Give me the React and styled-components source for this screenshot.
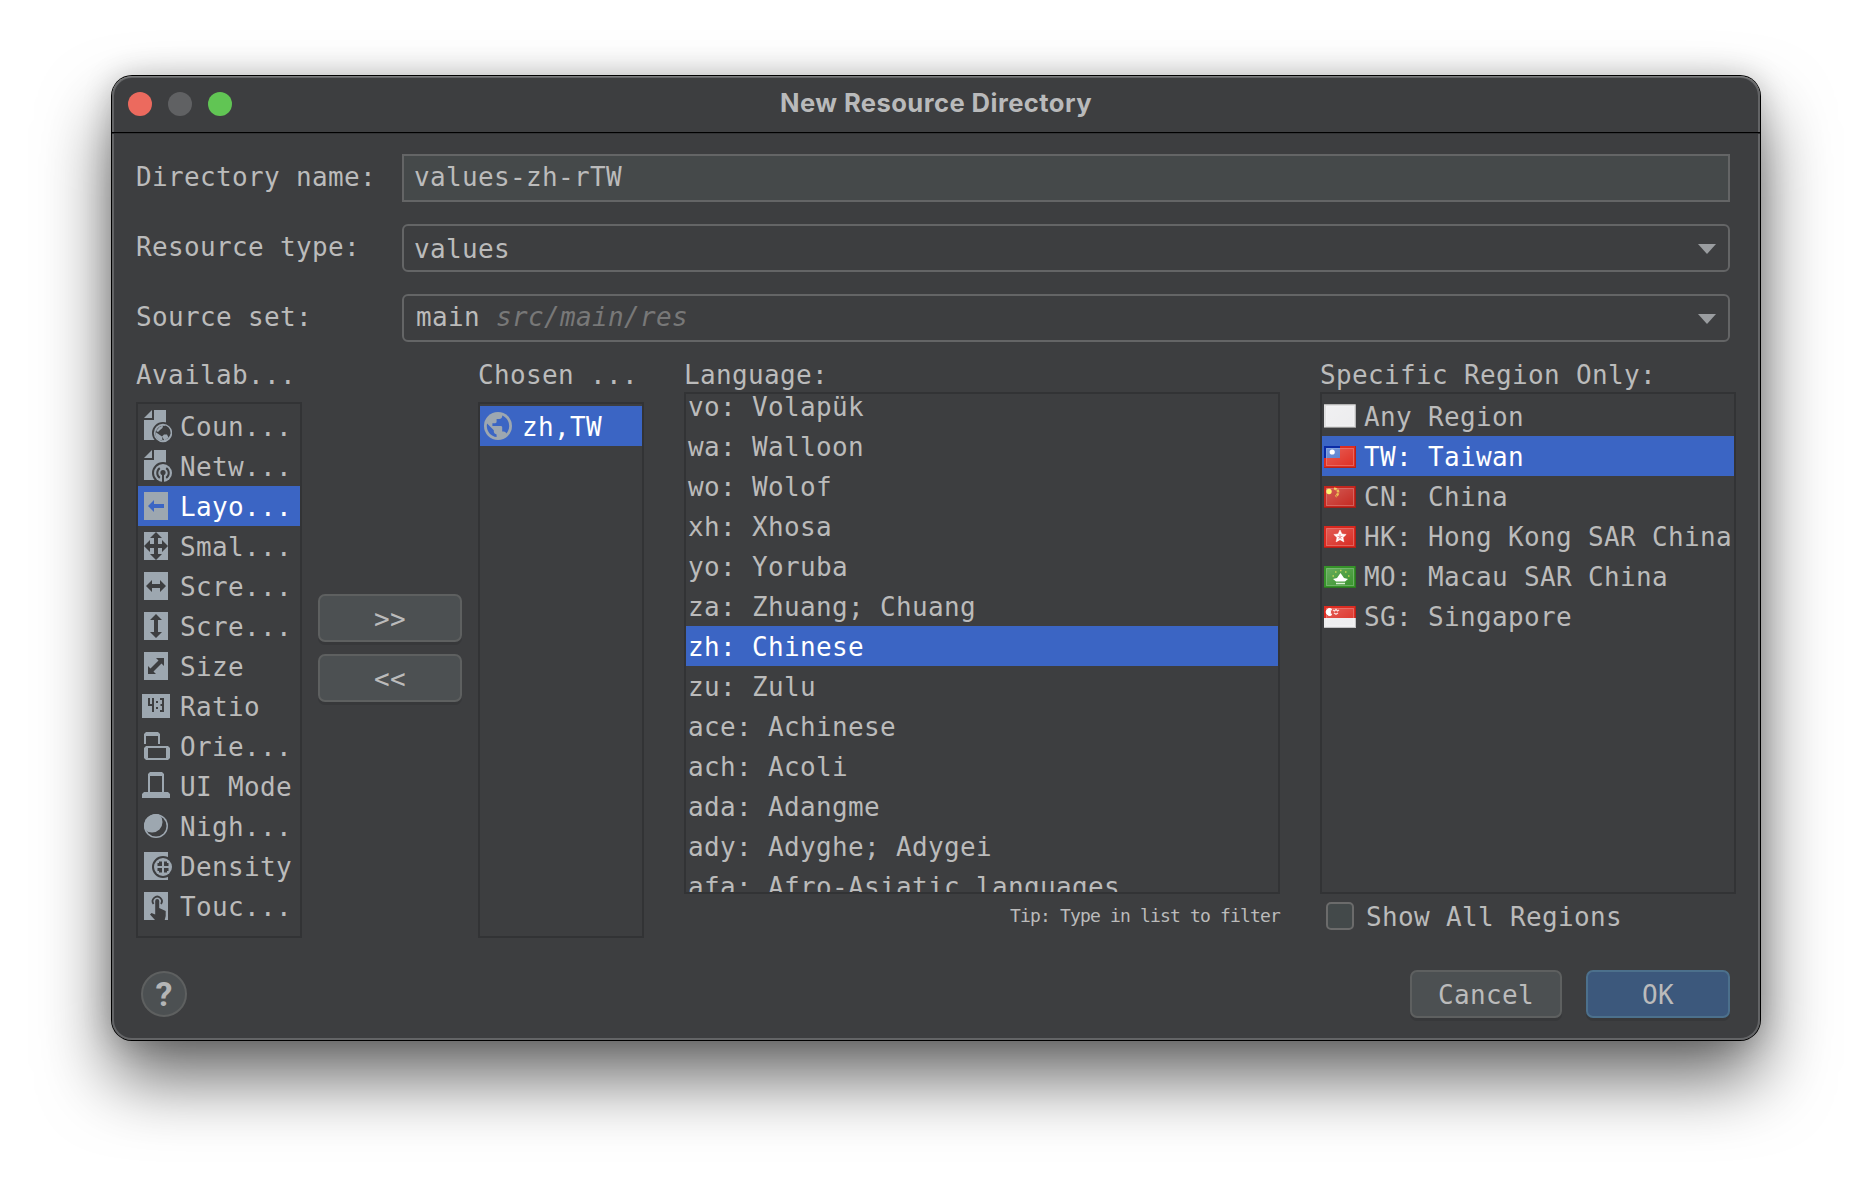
import React from 'react';
import styled, { createGlobalStyle } from 'styled-components';

const Global = createGlobalStyle`
  *, *::before, *::after { box-sizing: border-box; }
  html, body { margin: 0; background: #fff; }
  body { width: 1872px; height: 1188px; overflow: hidden; }
`;

const INK = '#9da7b0';
const PANEL = '#3d3e40';
const ACCENT = '#3b65c4';

const Desktop = styled.div`
  width: 1872px;
  height: 1188px;
  padding: 76px 112px 0;
  background: #fff;
`;

const Window = styled.div`
  width: 1648px;
  height: 964px;
  border-radius: 20px;
  display: flex;
  flex-direction: column;
  background: ${PANEL};
  color: #bbbbbb;
  font: 26px/40px "DejaVu Sans Mono", "Liberation Mono", monospace;
  letter-spacing: 0.347px;
  white-space: pre;
  box-shadow: inset 0 1px 0 #7c7d7e, inset 0 0 0 2px #636466, 0 0 0 1px #000,
    0 38px 70px rgba(0, 0, 0, 0.6), 0 0 30px rgba(0, 0, 0, 0.2);
`;

const TitleBar = styled.div`
  height: 58px;
  padding: 0 16px;
  display: grid;
  grid-template-columns: 104px 1fr 104px;
  align-items: center;
  border-bottom: 1px solid #323335;
  box-shadow: inset 0 -1px 0 #000;
`;

const Lights = styled.div`
  display: flex;
  gap: 16px;
  padding-bottom: 1px;
`;

const Light = styled.span`
  width: 24px;
  height: 24px;
  border-radius: 50%;
  background: ${(p) => p.$color};
`;

const Title = styled.div`
  text-align: center;
  font: 700 25.6px/32px Inter, "Liberation Sans", sans-serif;
  letter-spacing: 0.43px;
  color: #b9babb;
  padding-bottom: 3px;
`;

const Form = styled.div`
  display: grid;
  grid-template-columns: 266px 1328px;
  row-gap: 22px;
  padding: 20px 0 0 24px;
`;

const Label = styled.label`
  height: 48px;
  line-height: 46px;
`;

const Field = styled.div`
  height: 48px;
  display: flex;
  align-items: center;
  padding: ${(p) => p.$pad};
  border: 2px solid #646566;
  border-radius: ${(p) => (p.$combo ? '6px' : '0')};
  background: ${(p) => (p.$combo ? 'transparent' : '#45494a')};
`;

const Hint = styled.span`
  flex: 1;
  font-style: italic;
  color: #787878;
`;

const Value = styled.span`
  flex: ${(p) => (p.$grow ? 1 : 'none')};
`;

const ArrowSlot = styled.span`
  display: flex;
  padding-top: ${(p) => p.$drop || 0}px;
`;

const Panels = styled.div`
  display: flex;
  padding: 14px 0 0 24px;
  height: 596px;
`;

const Column = styled.div`
  width: ${(p) => p.$w}px;
  margin-right: ${(p) => p.$mr || 0}px;
  display: flex;
  flex-direction: column;
`;

const Heading = styled.div`
  flex: none;
  height: ${(p) => p.$h}px;
  line-height: 38px;
`;

const List = styled.div`
  flex: none;
  height: ${(p) => p.$h}px;
  border: 2px solid #323335;
  padding-top: 2px;
  overflow: hidden;
`;

const Scrolled = styled.div`
  margin-top: -10px;
`;

const Row = styled.div`
  height: 40px;
  padding: 2px 0 0 ${(p) => p.$pl}px;
  display: flex;
  align-items: center;
  gap: ${(p) => p.$gap || 0}px;
  color: ${(p) => (p.$on ? '#fff' : 'inherit')};
  background: ${(p) => (p.$on ? ACCENT : 'transparent')};
`;

const Glyph = styled.svg`
  flex: none;
  display: block;
  margin-bottom: ${(p) => p.$lift || 0}px;
`;

const Movers = styled.div`
  width: 144px;
  margin: 238px 16px 0;
  display: flex;
  flex-direction: column;
  gap: 12px;
`;

const Button = styled.button`
  width: ${(p) => p.$w}px;
  height: 48px;
  padding: 2px 0 0;
  border: 2px solid ${(p) => (p.$primary ? '#4c708c' : '#5e6060')};
  border-radius: 7px;
  background: ${(p) => (p.$primary ? '#3c587c' : '#4c5052')};
  box-shadow: 0 3px 0 #37383a;
  color: inherit;
  font: inherit;
  letter-spacing: inherit;
`;

const Tip = styled.div`
  padding-top: 4px;
  text-align: right;
  font-size: 18px;
  line-height: 36px;
  letter-spacing: -0.837px;
`;

const Check = styled.label`
  flex: none;
  display: flex;
  align-items: center;
  gap: 12px;
  padding-left: 6px;
  height: 44px;
`;

const CheckText = styled.span`
  padding-top: 2px;
`;

const Box = styled.span`
  width: 28px;
  height: 28px;
  border: 2px solid #6b6b6b;
  border-radius: 5px;
  background: #43494a;
`;

const Footer = styled.div`
  display: flex;
  align-items: center;
  padding: 32px 30px 0 29px;
`;

const Help = styled.button`
  width: 46px;
  height: 46px;
  padding: 0;
  display: flex;
  align-items: center;
  justify-content: center;
  margin-right: auto;
  border: 2px solid #5e6060;
  border-radius: 50%;
  background: #4c5052;
  color: #b4b5b6;
  font: 700 34px/40px Roboto, sans-serif;
`;

const Gap = styled.span`
  width: 24px;
`;

const Arrow = ({ drop }) => (
  <ArrowSlot $drop={drop}>
    <svg width="18" height="10" viewBox="0 0 18 10"><path d="M0 0H18L9 10Z" fill="#9a9da0" /></svg>
  </ArrowSlot>
);

const GlobeMarks = ({ bg }) => (
  <path
    fill={bg}
    d="M12.6 25.1C7.1 24.4 2.8 19.7 2.8 14c0-.9.1-1.7.3-2.5L9.8 18.2v1.4c0 1.5 1.3 2.8 2.8 2.8ZM22.3 21.5c-.4-1.1-1.4-1.9-2.7-1.9h-1.4v-4.2c0-.8-.6-1.4-1.4-1.4H8.400v-2.800h2.800c.8 0 1.400-.6 1.400-1.400V7h2.800c1.500 0 2.800-1.300 2.800-2.800v-.6c4.100 1.700 7 5.700 7 10.400 0 2.900-1.100 5.600-2.900 7.500Z"
  />
);

const Globe = ({ bg }) => (
  <Glyph $lift={2} width="28" height="28" viewBox="0 0 28 28"><circle cx="14" cy="14" r="14" fill={INK} /><GlobeMarks bg={bg} /></Glyph>
);

const Doc = () => <path d="M2 8L10 0V8ZM12 0H24V30H2V10H12Z" fill={INK} />;

const Square = () => <rect x="2" y="2" width="24" height="28" fill={INK} />;

const glyphs = {
  country: (bg) => (
    <>
      <Doc />
      <circle cx="21" cy="23" r="11" fill={bg} />
      <circle cx="21" cy="23" r="8.200" fill="none" stroke={INK} strokeWidth="2" />
      <path d="M14.500 20L17 24L20 26.500L20 30.500C16 30 13 26.500 13.500 22ZM18 20.500L21 17.500L23 15.500C27 16.500 29 20 28.500 24L26.500 27L25.500 24.500H23L22 22L18.500 22Z" fill={bg} />
      <path d="M14 21L17.500 17L21 15.500L20.500 18L18 20L16 22Z M13.500 22L20 26.500L20.500 30.500C16 30.500 13 27 13.500 22ZM22 24.500H25L26.500 27.500L22.500 30.500L20 26.500Z" fill={INK} />
    </>
  ),
  network: (bg) => (
    <>
      <Doc />
      <circle cx="21" cy="23" r="11" fill={bg} />
      <circle cx="21" cy="23" r="9" fill={INK} />
      <path d="M17.800 27.800A5.800 5.800 0 0 1 17.800 18.200M24.200 27.800A5.800 5.800 0 0 0 24.200 18.200" stroke={bg} strokeWidth="2" fill="none" />
      <circle cx="21" cy="22.500" r="2.600" fill={bg} />
      <path d="M20 23h2v10h-2z" fill={bg} />
    </>
  ),
  layout: (bg) => (<><Square /><path d="M6 16L12 10V14H22V18H12V22Z" fill={bg} /></>),
  smallest: (bg) => (
    <><Square /><path d="M14 2L20 8H16V14H20V10L26 16L20 22V18H16V24H20L14 30L8 24H12V18H8V22L2 16L8 10V14H12V8H8Z" fill={bg} /></>
  ),
  width: (bg) => (<><Square /><path d="M4 16L10 10V14H18V10L24 16L18 22V18H10V22Z" fill={bg} /></>),
  height: (bg) => (<><Square /><path d="M14 4L20 10H16V22H20L14 28L8 22H12V10H8Z" fill={bg} /></>),
  size: (bg) => (<><Square /><path d="M14 8H22V16L19.500 13.500L11.500 21.500L14 24H6V16L8.500 18.500L16.500 10.500Z" fill={bg} /></>),
  ratio: (bg) => (
    <>
      <rect y="4" width="28" height="24" fill={INK} />
      <path d="M7 8V15H11M11 8V22M18 9H21V21H18M18.500 15H21" stroke={bg} strokeWidth="2" fill="none" />
      <path d="M14 11h2v2h-2zM14 17h2v2h-2z" fill={bg} />
    </>
  ),
  orientation: () => (
    <>
      <path d="M2 14V4L4 2H16L18 4V14H16V6H4V14Z" fill={INK} />
      <path fillRule="evenodd" d="M4 16H26L28 18V28L26 30H4L2 28V18ZM6 18V28H24V18Z" fill={INK} />
    </>
  ),
  uimode: () => (
    <path fillRule="evenodd" d="M8 2H20L22 4V22H26L28 24V28H0V24L2 22H6V4ZM8 6V22H20V6Z" fill={INK} />
  ),
  night: (bg) => (
    <>
      <clipPath id="moon"><circle cx="14" cy="16" r="12" /></clipPath>
      <circle cx="14" cy="16" r="12" fill={INK} />
      <circle cx="14" cy="16" r="10.500" fill={bg} />
      <circle cx="10" cy="12" r="10.500" fill={INK} clipPath="url(#moon)" />
    </>
  ),
  density: (bg) => (
    <>
      <Square />
      <circle cx="21" cy="17" r="11" fill={bg} />
      <circle cx="21" cy="17" r="9" fill={INK} />
      <path d="M17 11.500H20V16H15.500V13H17ZM22 11.500H25V13H26.500V16H22ZM15.500 18H20V22.500H17V21H15.500ZM22 18H26.500V21H25V22.500H22Z" fill={bg} />
    </>
  ),
  touch: (bg) => (
    <>
      <Square />
      <path d="M11.500 14A4.600 4.600 0 1 1 19 14" stroke={bg} strokeWidth="1.800" fill="none" />
      <path d="M13.200 11a2 2 0 0 1 4 0v7l6.500 3v5l-1 4H13L8 24.500l1.500-1.500L13.200 24.500Z" fill={bg} />
    </>
  ),
};

const Icon = ({ name, on }) => (
  <Glyph width="30" height="34" viewBox="0 0 30 34">{glyphs[name](on ? ACCENT : PANEL)}</Glyph>
);

const flags = {
  any: () => (<><rect width="32" height="24" fill="#dfdfe0" /><rect x="2" y="2" width="28" height="20" fill="#ececee" /><path d="M0 .5H32M0 23.500H32" stroke="#b5b5b5" /></>),
  tw: () => (<><rect width="32" height="22" fill="#df2c20" /><rect width="16" height="12" fill="#0a2ba6" /><rect x="2" y="2" width="14" height="10" fill="#4673cc" /><circle cx="8.200" cy="6" r="2.600" fill="#fff" /></>),
  cn: () => (<><rect width="32" height="22" fill="#c4261e" /><circle cx="5" cy="5.500" r="2.700" fill="#fdf04c" /><path d="M10 2.500C15 3 15.500 8 11.500 10.500" fill="none" stroke="#e8b034" strokeWidth="2.500" strokeDasharray="2.800 .7" /></>),
  hk: () => (<><rect width="32" height="22" fill="#d8281f" /><path d="M16 4l1.900 4 4.300.5-3.200 3 .9 4.400-3.900-2.200-3.900 2.200.9-4.400-3.200-3 4.300-.5Z" fill="#fff" stroke="#fff" strokeOpacity=".5" strokeLinejoin="round" /><path d="M16 11V8M16 11l2.500-.7M16 11l1.500 2.200M16 11l-1.500 2.200M16 11l-2.500-.7" stroke="#e66" strokeWidth=".8" /></>),
  mo: () => (<><rect width="32" height="22" fill="#36922a" /><path d="M9 13l4-1 3.500-5 3.500 5 4 1-3 2.500h-9Z" fill="#fff" /><path d="M12 17.500h9" stroke="#d7f0d0" strokeWidth="1.500" /><path d="M16 4.500h1.500M11 6h1.500M21 6h1.500M8.500 10h1.500M24 10h1.500" stroke="#b9cc3a" strokeWidth="1.500" /></>),
  sg: () => (<><rect width="32" height="12" fill="#dc2c22" /><rect y="12" width="32" height="10" fill="#ececee" /><path d="M7.500 3A3.500 3.500 0 1 0 7.500 9A4.500 4.500 0 0 1 7.500 3Z" fill="#fff" stroke="#fff" /><path d="M9 4l1.500 1L12 3.500 13.500 5 15 4M10 7l2 1.300L14 7" stroke="#fbd8d6" strokeWidth="1.300" fill="none" /></>),
};

const Flag = ({ code }) => {
  const blank = code === 'any';
  const h = blank ? 24 : 22;
  return (
    <Glyph $lift={blank ? 2 : 0} width="32" height={h} viewBox={`0 0 32 ${h}`}>
      <defs>
        <linearGradient id="gloss" x1="0" y1="0" x2="1" y2="1">
          <stop offset="0" stopColor="#fff" stopOpacity=".24" />
          <stop offset="1" stopColor="#fff" stopOpacity="0.02" />
        </linearGradient>
      </defs>
      {flags[code]()}
      <rect x="2.500" y="2.500" width="27" height={h - 5} fill="url(#gloss)" stroke="#fff" strokeOpacity=".25" />
      <path d={`M31.500 0V${h - 0.5}H0`} fill="none" stroke="#000" strokeOpacity=".18" />
    </Glyph>
  );
};

const qualifiers = [
  ['country', 'Coun...'], ['network', 'Netw...'], ['layout', 'Layo...'], ['smallest', 'Smal...'],
  ['width', 'Scre...'], ['height', 'Scre...'], ['size', 'Size'], ['ratio', 'Ratio'],
  ['orientation', 'Orie...'], ['uimode', 'UI Mode'], ['night', 'Nigh...'], ['density', 'Density'], ['touch', 'Touc...'],
];

const languages = [
  'vo: Volapük', 'wa: Walloon', 'wo: Wolof', 'xh: Xhosa', 'yo: Yoruba', 'za: Zhuang; Chuang',
  'zh: Chinese', 'zu: Zulu', 'ace: Achinese', 'ach: Acoli', 'ada: Adangme', 'ady: Adyghe; Adygei',
  'afa: Afro-Asiatic languages',
];

const regions = [
  ['any', 'Any Region'], ['tw', 'TW: Taiwan'], ['cn', 'CN: China'],
  ['hk', 'HK: Hong Kong SAR China'], ['mo', 'MO: Macau SAR China'], ['sg', 'SG: Singapore'],
];

export default function App() {
  return (
    <Desktop>
      <Global />
      <Window>
        <TitleBar>
          <Lights>
            <Light $color="#ec6a5e" />
            <Light $color="#606163" />
            <Light $color="#61c554" />
          </Lights>
          <Title>New Resource Directory</Title>
        </TitleBar>
        <Form>
          <Label>Directory name:</Label>
          <Field $pad="0 10px 2px">values-zh-rTW</Field>
          <Label>Resource type:</Label>
          <Field $combo $pad="2px 12px 0 10px"><Value $grow>values</Value><Arrow /></Field>
          <Label>Source set:</Label>
          <Field $combo $pad="0 12px 2px 12px"><Value>main </Value><Hint>src/main/res</Hint><Arrow drop={4} /></Field>
        </Form>
        <Panels>
          <Column $w={166}>
            <Heading $h={46}>Availab...</Heading>
            <List $h={536}>
              {qualifiers.map(([icon, text]) => (
                <Row key={icon} $pl={4} $gap={8} $on={icon === 'layout'}>
                  <Icon name={icon} on={icon === 'layout'} />
                  {text}
                </Row>
              ))}
            </List>
          </Column>
          <Movers>
            <Button $w={144}>&gt;&gt;</Button>
            <Button $w={144}>&lt;&lt;</Button>
          </Movers>
          <Column $w={166} $mr={40}>
            <Heading $h={46}>Chosen ...</Heading>
            <List $h={536}>
              <Row $pl={4} $gap={10} $on><Globe bg={ACCENT} />zh,TW</Row>
            </List>
          </Column>
          <Column $w={596} $mr={40}>
            <Heading $h={36}>Language:</Heading>
            <List $h={502}>
              <Scrolled>
                {languages.map((text) => <Row key={text} $pl={2} $on={text.startsWith('zh')}>{text}</Row>)}
              </Scrolled>
            </List>
            <Tip>Tip: Type in list to filter</Tip>
          </Column>
          <Column $w={416}>
            <Heading $h={36}>Specific Region Only:</Heading>
            <List $h={502}>
              {regions.map(([code, text]) => (
                <Row key={code} $pl={2} $gap={8} $on={code === 'tw'}><Flag code={code} />{text}</Row>
              ))}
            </List>
            <Check><Box /><CheckText>Show All Regions</CheckText></Check>
          </Column>
        </Panels>
        <Footer>
          <Help>?</Help>
          <Button $w={152}>Cancel</Button>
          <Gap />
          <Button $w={144} $primary>OK</Button>
        </Footer>
      </Window>
    </Desktop>
  );
}
